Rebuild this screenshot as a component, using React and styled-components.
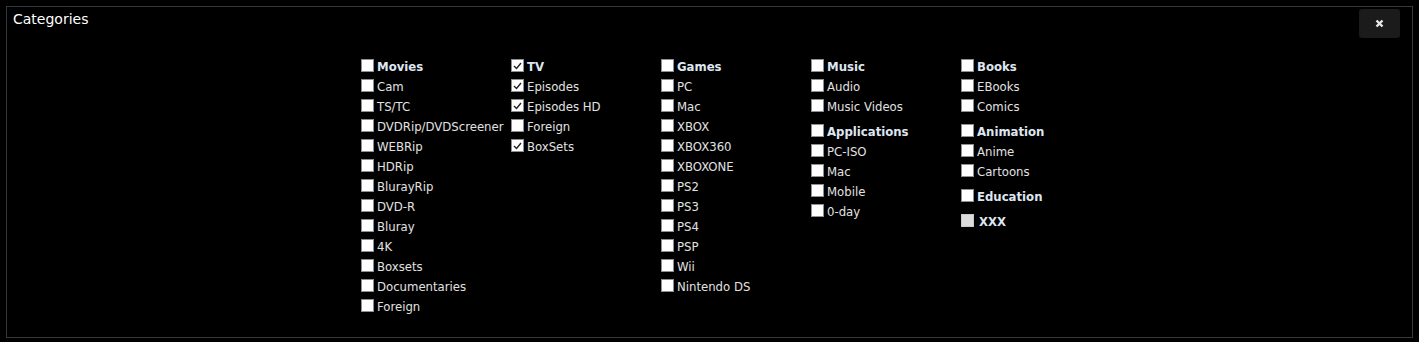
import React from "react"
import styled, { createGlobalStyle } from "styled-components"

// -----------------------------------------------------------------------------
// Data
// -----------------------------------------------------------------------------

const columns = [
  [
    {
      title: "Movies",
      items: [
        "Cam",
        "TS/TC",
        "DVDRip/DVDScreener",
        "WEBRip",
        "HDRip",
        "BlurayRip",
        "DVD-R",
        "Bluray",
        "4K",
        "Boxsets",
        "Documentaries",
        "Foreign",
      ],
    },
  ],
  [
    {
      title: "TV",
      checked: true,
      items: [
        { label: "Episodes", checked: true },
        { label: "Episodes HD", checked: true },
        "Foreign",
        { label: "BoxSets", checked: true },
      ],
    },
  ],
  [
    {
      title: "Games",
      items: ["PC", "Mac", "XBOX", "XBOX360", "XBOXONE", "PS2", "PS3", "PS4", "PSP", "Wii", "Nintendo DS"],
    },
  ],
  [
    { title: "Music", items: ["Audio", "Music Videos"] },
    { title: "Applications", items: ["PC-ISO", "Mac", "Mobile", "0-day"] },
  ],
  [
    { title: "Books", items: ["EBooks", "Comics"] },
    { title: "Animation", items: ["Anime", "Cartoons"] },
    { title: "Education", items: [] },
    { title: "XXX", disabled: true, items: [] },
  ],
]

// -----------------------------------------------------------------------------
// Sub-components
// -----------------------------------------------------------------------------

const GlobalStyle = createGlobalStyle`
  html, body {
    margin: 0;
    background: #000;
  }
  body {
    padding: 6px;
    font-family: "DejaVu Sans Condensed", "DejaVu Sans", Verdana, sans-serif;
    color: #e2e2e2;
  }
`

const Panel = styled.section`
  height: 332px;
  box-sizing: border-box;
  border: 1px solid #323a3e;
  background: #000;
`

const Header = styled.div`
  display: flex;
  justify-content: space-between;
  align-items: flex-start;
  padding: 2px 12px 0 6px;
`

const Title = styled.h2`
  margin: 2px 0 0;
  font-family: "DejaVu Sans", Verdana, sans-serif;
  font-size: 14px;
  font-weight: normal;
  color: #fff;
`

const CloseButton = styled.button`
  width: 41px;
  height: 29px;
  border: none;
  border-radius: 3px;
  background: #1b1b1b;
  display: flex;
  align-items: center;
  justify-content: center;
  padding: 0;
  cursor: pointer;
`

const Grid = styled.div`
  display: grid;
  grid-template-columns: repeat(5, 150px);
  padding: 18px 0 0 354px;
`

const Column = styled.div`
  display: flex;
  flex-direction: column;
  gap: 5px;
`

const Group = styled.div`
  display: flex;
  flex-direction: column;
`

const Row = styled.label`
  display: flex;
  align-items: center;
  height: 20px;
  font-size: 13px;
  font-weight: ${({ $head }) => ($head ? "bold" : "normal")};
  color: ${({ $head }) => ($head ? "#dfe6f2" : "#e2e2e2")};
  white-space: nowrap;
`

const Box = styled.span`
  width: 13px;
  height: 13px;
  box-sizing: border-box;
  flex: none;
  border: 1px solid ${({ $disabled }) => ($disabled ? "#c8c8c8" : "#8f8f8f")};
  background: ${({ $disabled }) => ($disabled ? "#dcdcdc" : "#fff")};
  margin-right: ${({ $disabled }) => ($disabled ? "5px" : "3px")};
  margin-top: -1px;
  display: flex;
  align-items: center;
  justify-content: center;
`

// -----------------------------------------------------------------------------
// Component
// -----------------------------------------------------------------------------

const Check = ({ checked, disabled }) => (
  <Box $disabled={disabled}>
    {checked && (
      <svg width="9" height="8" viewBox="0 0 9 8">
        <path d="M1 4 L3.5 6.5 L8 1" fill="none" stroke="#222" strokeWidth="1.4" />
      </svg>
    )}
  </Box>
)

const App = () => {
  return (
    <>
      <GlobalStyle />
      <Panel>
        <Header>
          <Title>Categories</Title>
          <CloseButton aria-label="Close">
            <svg width="9" height="9" viewBox="0 0 9 9">
              <path d="M1.5 1.5 L7.5 7.5 M7.5 1.5 L1.5 7.5" stroke="#e8e8e8" strokeWidth="2.4" />
            </svg>
          </CloseButton>
        </Header>
        <Grid>
          {columns.map((groups, ci) => (
            <Column key={ci}>
              {groups.map((g) => (
                <Group key={g.title}>
                  <Row $head>
                    <Check checked={g.checked} disabled={g.disabled} />
                    {g.title}
                  </Row>
                  {g.items.map((it) => {
                    const item = typeof it === "string" ? { label: it } : it
                    return (
                      <Row key={item.label}>
                        <Check checked={item.checked} />
                        {item.label}
                      </Row>
                    )
                  })}
                </Group>
              ))}
            </Column>
          ))}
        </Grid>
      </Panel>
    </>
  )
}

export default App
